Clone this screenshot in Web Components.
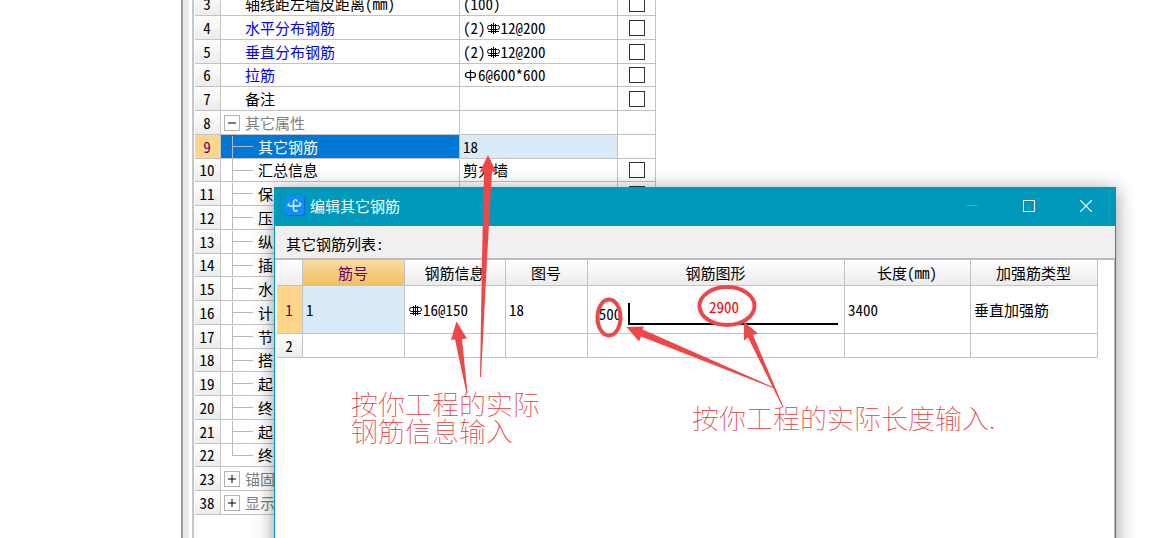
<!DOCTYPE html>
<html lang="zh-CN">
<head>
<meta charset="utf-8">
<title>编辑其它钢筋</title>
<style>
html, body {
	height: 100%;
	margin: 0;
}
body {
	position: relative;
	overflow: hidden;
	background: #fff;
	color: #000;
	font: 15px/18px "Noto Sans CJK SC", sans-serif;
	font-feature-settings: "hwid";
}
</style>
</head>
<body>
<property-panel>
	<property-grid></property-grid>
</property-panel>
<app-window caption="编辑其它钢筋">
	<span slot="toolbar">其它钢筋列表:</span>
	<rebar-table></rebar-table>
</app-window>
<note-layer></note-layer>

<script>
class RebarMark extends HTMLElement {
	constructor() {
		super();
		let shadowRoot = this.attachShadow({mode: 'open'});
		const grade = this.getAttribute('grade');
		shadowRoot.innerHTML = `
		<style>
		:host {
			display: inline-block;
			width: 15px;
			height: 15px;
			vertical-align: -2px;
		}
		svg {
			display: block;
			fill: none;
			stroke: currentColor;
		}
		</style>
		<svg width="15" height="15" viewBox="0 0 15 15">${grade == '1'
			? '<path d="M7.500 2v11" stroke-width="1.300"/><rect x="2.500" y="4.500" width="10" height="5" rx="2.500" stroke-width="1.200"/>'
			: '<path d="M7.500 2v11M5.500 3v9M9.500 3v9M2 10.500h11"/><rect x="1.500" y="4.500" width="12" height="4" rx="2"/>'}
		</svg>`;
	}
}
window.customElements.define('rebar-mark', RebarMark);

class PropertyPanel extends HTMLElement {
	constructor() {
		super();
		let shadowRoot = this.attachShadow({mode: 'open'});
		shadowRoot.innerHTML = `
		<style>
		:host {
			display: flex;
			height: 100%;
			box-sizing: border-box;
			padding-left: 181px;
			overflow: hidden;
		}
		.splitter {
			width: 6px;
			flex: none;
			border-left: 2px solid #989a9e;
			background: #ebebeb;
		}
		.view {
			flex: 1;
			margin-left: 3px;
			padding-left: 1px;
			border-left: 2px solid #c6c6cd;
		}
		</style>
		<div class="splitter"></div>
		<div class="view"><slot></slot></div>`;
	}
}
window.customElements.define('property-panel', PropertyPanel);

const properties = [
	{no: 3, name: '轴线距左墙皮距离(mm)', value: '(100)', check: true},
	{no: 4, name: '水平分布钢筋', value: '(2)<rebar-mark grade="3"></rebar-mark>12@200', check: true, key: true},
	{no: 5, name: '垂直分布钢筋', value: '(2)<rebar-mark grade="3"></rebar-mark>12@200', check: true, key: true},
	{no: 6, name: '拉筋', value: '<rebar-mark grade="1"></rebar-mark>6@600*600', check: true, key: true},
	{no: 7, name: '备注', check: true},
	{no: 8, name: '其它属性', group: '−'},
	{no: 9, name: '其它钢筋', value: '18', child: true, selected: true},
	{no: 10, name: '汇总信息', value: '剪力墙', child: true, check: true},
	{no: 11, name: '保', child: true, check: true},
	{no: 12, name: '压', child: true},
	{no: 13, name: '纵', child: true},
	{no: 14, name: '插', child: true},
	{no: 15, name: '水', child: true},
	{no: 16, name: '计', child: true},
	{no: 17, name: '节', child: true},
	{no: 18, name: '搭', child: true},
	{no: 19, name: '起', child: true},
	{no: 20, name: '终', child: true},
	{no: 21, name: '起', child: true},
	{no: 22, name: '终', child: true, last: true},
	{no: 23, name: '锚固', group: '+'},
	{no: 38, name: '显示', group: '+'}
];

class PropertyGrid extends HTMLElement {
	constructor() {
		super();
		let shadowRoot = this.attachShadow({mode: 'open'});
		shadowRoot.innerHTML = `
		<style>
		:host {
			display: block;
			/* scrolled part way into row 3 */
			margin-top: -8px;
		}
		table {
			table-layout: fixed;
			width: 461px;
			border-collapse: separate;
			border-spacing: 0;
		}
		.no { width: 26px; }
		.name { width: 239px; }
		.value { width: 158px; }
		.check { width: 38px; }
		tr { height: 24px; }
		tr:nth-child(4n) { height: 23px; }
		th, td {
			box-sizing: border-box;
			padding: 0 3px;
			border: solid #c3c3c3;
			border-width: 0 1px 1px 0;
			font-weight: 400;
			line-height: 18px;
			text-align: left;
			white-space: nowrap;
		}
		th {
			padding: 0 1px 0 0;
			text-align: center;
			background: linear-gradient(#fff, #ececec);
		}
		td:nth-child(2) { padding: 0; }
		td:last-child { text-align: center; }
		.cell {
			display: flex;
			align-items: center;
			padding-left: 24px;
			height: 22px;
			overflow: hidden;
		}
		.key { color: #00f; }
		.group {
			color: #808080;
			padding-left: 3px;
			gap: 5px;
		}
		.child {
			padding-left: 11px;
			gap: 5px;
		}
		.branch {
			align-self: stretch;
			width: 21px;
			flex: none;
			background: linear-gradient(#b8b8b8, #b8b8b8) 0 50% / 100% 1px no-repeat,
				linear-gradient(#b8b8b8, #b8b8b8) 0 0 / 1px 100% no-repeat;
		}
		.last .branch {
			background-size: 100% 1px, 1px 50%;
		}
		.selected th {
			color: #606;
			background: #ffd58c;
		}
		.selected td:nth-child(2) {
			color: #fff;
			background: #0078d7;
		}
		.selected td:nth-child(3) { background: #d9eaf8; }
		button {
			width: 16px;
			height: 16px;
			padding: 0;
			border: 1px solid #b4b4b4;
			background: #fff;
		}
		button svg {
			display: block;
			stroke: #000;
		}
		input {
			display: block;
			appearance: none;
			width: 16px;
			height: 16px;
			margin: 0 auto;
			border: 1px solid #333;
			background: #fff;
		}
		</style>
		<table>
			<colgroup><col class="no"><col class="name"><col class="value"><col class="check"></colgroup>
			<tbody>${properties.map(p => this.row(p)).join('')}</tbody>
		</table>`;
	}

	row(p) {
		const kind = p.group ? 'group' : p.child ? 'child' : '';
		const plus = p.group == '+' ? 'M7 3v8' : '';
		return `
		<tr class="${p.selected ? 'selected' : ''} ${p.last ? 'last' : ''}">
			<th scope="row">${p.no}</th>
			<td><div class="cell ${kind} ${p.key ? 'key' : ''}">
				${p.group ? `<button aria-label="${p.name}"><svg width="14" height="14" viewBox="0 0 14 14"><path d="M3 7h8${plus}"/></svg></button>` : ''}
				${p.child ? '<i class="branch"></i>' : ''}
				<span>${p.name}</span>
			</div></td>
			<td>${p.value || ''}</td>
			<td>${p.check ? `<input type="checkbox" aria-label="${p.name}">` : ''}</td>
		</tr>`;
	}
}
window.customElements.define('property-grid', PropertyGrid);

class AppWindow extends HTMLElement {
	constructor() {
		super();
		let shadowRoot = this.attachShadow({mode: 'open'});
		shadowRoot.innerHTML = `
		<style>
		:host {
			position: absolute;
			top: 187px;
			right: 39px;
			bottom: -20px;
			left: 274px;
			display: flex;
			flex-direction: column;
			box-sizing: border-box;
			border: 1px solid #0099bc;
			background: #fff;
			box-shadow: 0 3px 18px rgba(0, 0, 0, .42);
		}
		header {
			display: flex;
			align-items: center;
			box-sizing: border-box;
			height: 38px;
			flex: none;
			padding: 0 1px 2px 10px;
			color: #fff;
			background: #0099bc;
		}
		h1 {
			flex: 1;
			margin: 0 0 0 5px;
			font-size: 15px;
			font-weight: 400;
			line-height: 18px;
		}
		button {
			width: 57px;
			height: 36px;
			padding: 0;
			border: 0;
			background: none;
			color: #fff;
		}
		button:disabled { color: #3db0cb; }
		svg {
			display: block;
			fill: none;
			stroke: currentColor;
		}
		button svg { margin: auto; }
		.toolbar {
			height: 32px;
			flex: none;
			padding-left: 11px;
			line-height: 36px;
			background: #f0f0f0;
			border-bottom: 2px solid #b9b9bf;
		}
		.content {
			flex: 1;
			padding-left: 2px;
			border-right: 1px solid #b9b9bf;
		}
		</style>
		<header>
			<svg width="20" height="20" viewBox="0 0 20 20">
				<rect x="1" y="1" width="19" height="19" rx="3" fill="#0868d0" stroke="none"/>
				<rect width="19" height="19" rx="3" fill="#118cf8" stroke="none"/>
				<path d="M12 5.500C11.500 3 8.500 3.500 8.500 6v7c0 2.500 3 3 4 1M4.500 7.500C2 9 3 10 5 10h8c3 0 3.500-2.500 1-3" stroke="#d8f2ff" stroke-width="1.500"/>
			</svg>
			<h1></h1>
			<button disabled aria-label="最小化"><svg width="12" height="12"><path d="M0 5.500h12"/></svg></button>
			<button aria-label="最大化"><svg width="12" height="12"><rect x=".5" y=".5" width="11" height="11"/></svg></button>
			<button aria-label="关闭"><svg width="12" height="12"><path d="M0 0l12 12M12 0L0 12" stroke-width="1.200"/></svg></button>
		</header>
		<div class="toolbar"><slot name="toolbar"></slot></div>
		<div class="content"><slot></slot></div>`;
	}

	connectedCallback() {
		this.shadowRoot.querySelector('h1').textContent = this.getAttribute('caption');
	}
}
window.customElements.define('app-window', AppWindow);

class RebarTable extends HTMLElement {
	constructor() {
		super();
		let shadowRoot = this.attachShadow({mode: 'open'});
		shadowRoot.innerHTML = `
		<style>
		:host {
			display: block;
		}
		table {
			table-layout: fixed;
			width: 821px;
			border-collapse: separate;
			border-spacing: 0;
		}
		th, td {
			box-sizing: border-box;
			height: 24px;
			padding: 0 3px;
			border: solid #c3c3c3;
			border-width: 0 1px 1px 0;
			font-weight: 400;
			line-height: 18px;
			text-align: left;
			white-space: nowrap;
		}
		th {
			padding: 0 1px 0 0;
			text-align: center;
			background: linear-gradient(#fff, #ececec);
		}
		thead th { height: 26px; }
		.first td, .first th { height: 48px; }
		thead .current {
			color: #606;
			background: linear-gradient(#fadca2, #f1c062);
		}
		tbody .current {
			color: #606;
			background: #ffd58c;
		}
		td.active { background: #d9eaf8; }
		.first .shape { padding: 0; }
		.shape svg { display: block; }
		text {
			font-size: 15px;
			text-anchor: middle;
		}
		</style>
		<table>
			<colgroup>
				<col style="width:26px"><col style="width:102px"><col style="width:101px"><col style="width:82px">
				<col style="width:257px"><col style="width:126px"><col style="width:127px">
			</colgroup>
			<thead>
				<tr><th></th><th class="current">筋号</th><th>钢筋信息</th><th>图号</th><th>钢筋图形</th><th>长度(mm)</th><th>加强筋类型</th></tr>
			</thead>
			<tbody>
				<tr class="first">
					<th class="current">1</th>
					<td class="active">1</td>
					<td><rebar-mark grade="3"></rebar-mark>16@150</td>
					<td>18</td>
					<td class="shape"><svg width="256" height="46" viewBox="0 0 256 46">
						<path d="M41 16v21h209" fill="none" stroke="#000" stroke-width="2"/>
						<text x="22" y="33">500</text>
						<text x="136" y="26" fill="#f00">2900</text>
					</svg></td>
					<td>3400</td>
					<td>垂直加强筋</td>
				</tr>
				<tr><th>2</th><td></td><td></td><td></td><td></td><td></td><td></td></tr>
			</tbody>
		</table>`;
	}
}
window.customElements.define('rebar-table', RebarTable);

class NoteLayer extends HTMLElement {
	constructor() {
		super();
		let shadowRoot = this.attachShadow({mode: 'open'});
		shadowRoot.innerHTML = `
		<style>
		:host {
			position: absolute;
			inset: 0;
			overflow: hidden;
			pointer-events: none;
			color: #ec4849;
		}
		svg {
			display: block;
			fill: currentColor;
		}
		ellipse {
			fill: none;
			stroke: currentColor;
			stroke-width: 4;
		}
		p {
			position: absolute;
			margin: 0;
			color: #e8383a;
			font-size: 27px;
			font-weight: 100;
			font-feature-settings: normal;
			line-height: 27px;
			white-space: nowrap;
		}
		.info {
			left: 351px;
			top: 390px;
		}
		.length {
			left: 692px;
			top: 404px;
		}
		</style>
		<svg width="1155" height="538" viewBox="0 0 1155 538">
			<path d="M488 155l8.500 17.500-4.500-1L487 260l-6 117h-1l2-117 2-89-4.500 1.500z"/>
			<path d="M456.500 321.500l10.500 17-5 .5 5.500 54h-1L455 339.500l-4 .5z"/>
			<path d="M626.500 327l17.500-.5-1.500 3L774 387.500v1L641 336.500l-2 5z"/>
			<path d="M744 322l14 11.500-5 1.500 30.500 72h-1L748 337.500l-4 3z"/>
			<ellipse cx="609" cy="317.500" rx="11.500" ry="18"/>
			<ellipse cx="727" cy="306" rx="27.500" ry="19"/>
		</svg>
		<p class="info">按你工程的实际<br>钢筋信息输入</p>
		<p class="length">按你工程的实际长度输入.</p>`;
	}
}
window.customElements.define('note-layer', NoteLayer);
</script>
</body>
</html>
